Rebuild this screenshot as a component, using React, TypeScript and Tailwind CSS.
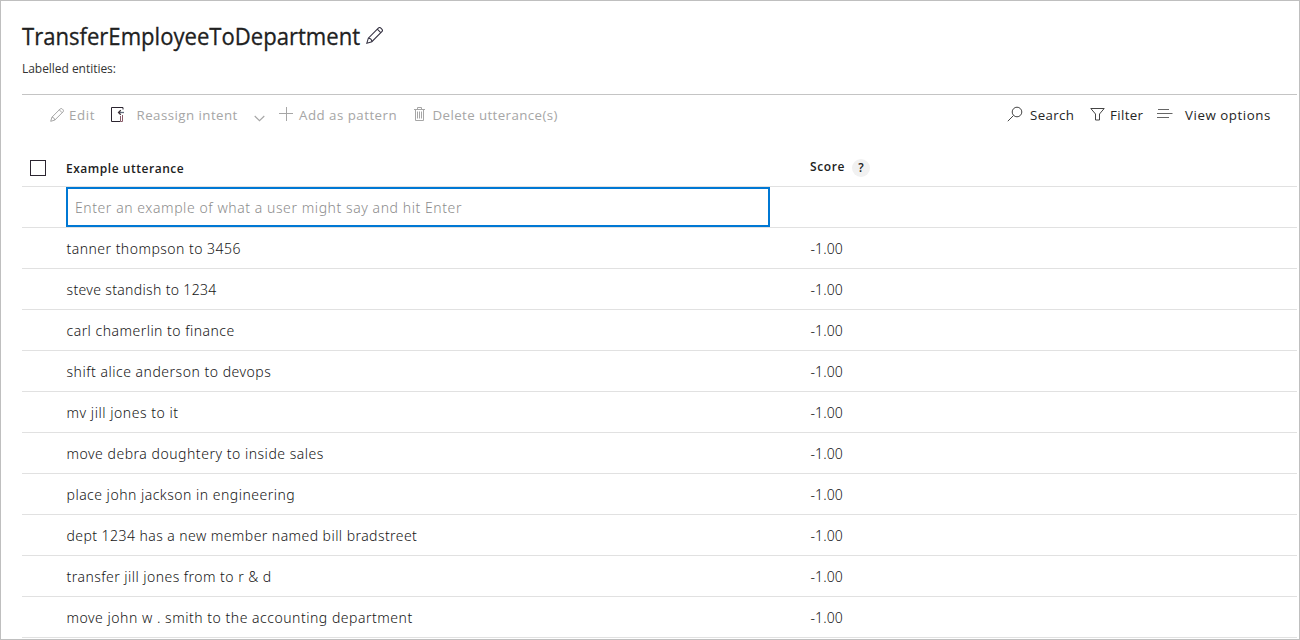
type Row = { text: string; tracking: string };

const rows: Row[] = [
  { text: "tanner thompson to 3456", tracking: "tracking-[0.47px]" },
  { text: "steve standish to 1234", tracking: "tracking-[0.34px]" },
  { text: "carl chamerlin to finance", tracking: "tracking-[0.48px]" },
  { text: "shift alice anderson to devops", tracking: "tracking-[0.51px]" },
  { text: "mv jill jones to it", tracking: "tracking-[0.54px]" },
  { text: "move debra doughtery to inside sales", tracking: "tracking-[0.52px]" },
  { text: "place john jackson in engineering", tracking: "tracking-[0.49px]" },
  { text: "dept 1234 has a new member named bill bradstreet", tracking: "tracking-[0.44px]" },
  { text: "transfer jill jones from to r & d", tracking: "tracking-[0.46px]" },
  { text: "move john w . smith to the accounting department", tracking: "tracking-[0.52px]" },
];

function Pencil({ className }: { className: string }) {
  return (
    <svg className={className} viewBox="0 0 16 16" fill="none" stroke="currentColor" strokeWidth="1">
      <path d="M.8 15.200l1.400-4.700L11.600 1.100a1.700 1.700 0 0 1 2.400 0l.9.9a1.700 1.700 0 0 1 0 2.400L5.500 13.800z" />
      <path d="M2.200 10.500c1.700.1 3.200 1.600 3.300 3.300M10.600 2.100l3.300 3.300" />
    </svg>
  );
}

export default function App() {
  return (
    <div className="flex h-[640px] w-[1300px] flex-col overflow-hidden border border-[#bfbfbf] bg-white pr-[2px] pl-[21px] font-['Open_Sans','Noto_Sans',sans-serif] whitespace-nowrap text-[#212121]">
      <header className="flex h-[94px] shrink-0 flex-col border-b border-[#c4c4c4] pt-5">
        <div className="-mt-px flex h-8 items-center">
          <h1 className="w-[344px] origin-left scale-x-[0.92] text-[24px] leading-8 [-webkit-text-stroke:0.3px_#212121]">
            TransferEmployeeToDepartment
          </h1>
          <Pencil className="-mt-px size-[17px] text-[#333040]" />
        </div>
        <div className="mt-[9px] text-[12px] leading-4 tracking-[-0.04px] text-[#333]">Labelled entities:</div>
      </header>

      <div className="flex h-[40px] shrink-0 items-center pl-[28px] text-[13.3px] leading-5 text-[#a6a6a6]">
        <Pencil className="mr-[5px] size-[14px] text-[#999]" />
        <span className="w-[41.5px] tracking-[0.65px]">Edit</span>
        <svg className="mr-[12px] h-[16px] w-[14px]" viewBox="0 0 14 16" fill="none">
          <path d="M12 2.500V.5H.5v14h9" stroke="#2b2530" strokeWidth="1" />
          <path d="M13 5.500H7.500" stroke="#5f6a7a" strokeWidth="1.300" />
          <path d="M9.800 3.300L7.500 5.500l2.300 2.200" stroke="#3c3036" strokeWidth="1.200" />
          <path d="M11.500 8v6.500h-2M9.500 9v5" stroke="#8a5a68" strokeWidth="1" />
        </svg>
        <span className="w-[117.5px] tracking-[0.45px]">Reassign intent</span>
        <svg className="mt-[7px] mr-[14px] h-[7px] w-[11px]" viewBox="0 0 11 7" fill="none" stroke="currentColor" strokeWidth="1.100">
          <path d="M.7 1l4.800 4.700L10.300 1" />
        </svg>
        <svg className="-mt-[2px] mr-[6px] size-[14px]" viewBox="0 0 14 14" fill="none" stroke="currentColor">
          <path d="M0 6.500h14M7.500 0v14" />
        </svg>
        <span className="w-[115px] tracking-[0.48px]">Add as pattern</span>
        <svg className="-mt-[2px] mr-[7.500px] h-[14px] w-[11px]" viewBox="0 0 11 14" fill="none" stroke="currentColor">
          <path d="M0 2.500h11M3.500 2.500v-2h4v2M1.500 2.500v11h8v-11M3.500 4.500v7M5.500 4.500v7M7.500 4.500v7" />
        </svg>
        <span className="tracking-[0.4px]">Delete utterance(s)</span>

        <div className="ml-auto flex items-center pr-[25px] text-[#252525]">
          <svg className="-mt-[3px] mr-[7px] size-[16px]" viewBox="0 0 16 16" fill="none" stroke="#444">
            <circle cx="10" cy="6" r="4.800" />
            <path d="M6.500 9.500L.8 15.200" />
          </svg>
          <span className="w-[60px] tracking-[0.35px]">Search</span>
          <svg className="-mt-[3px] mr-[5px] h-[14px] w-[15px]" viewBox="0 0 15 14" fill="none" stroke="#444">
            <path d="M.8 1.500h13.400L9.500 7v6h-4V7z" />
          </svg>
          <span className="w-[47px] tracking-[0.35px]">Filter</span>
          <svg className="-mt-[3px] mr-[12px] h-[9px] w-[16px]" viewBox="0 0 16 9" fill="none" stroke="#666">
            <path d="M1 .5h11M0 4.500h15.500M0 8.500h12" />
          </svg>
          <span className="w-[87px] tracking-[0.55px]">View options</span>
        </div>
      </div>

      <div className="flex h-[52px] shrink-0 items-start border-b border-[#e1e1e1] pt-[22px] text-[12px] leading-5 font-semibold">
        <div className="mt-[3px] ml-[8px] size-[16px] border border-[#2b2530]" />
        <div className="mt-[2px] ml-[20px] w-[744px] tracking-[0.53px]">Example utterance</div>
        <div className="w-[42px] tracking-[0.6px]">Score</div>
        <div className="mt-[2px] flex size-[18px] items-center justify-center rounded-full bg-[#f1f1f1] text-[12px]">?</div>
      </div>

      <div className="flex h-[41px] shrink-0 border-b border-[#e1e1e1] pl-[44px] font-['Noto_Sans',sans-serif]">
        <div className="flex h-[40px] w-[704px] items-center border-2 border-[#0078d4] pl-[7px] text-[14px] font-light tracking-[0.57px] text-[#8c8c8c]">
          Enter an example of what a user might say and hit Enter
        </div>
      </div>

      {rows.map((row) => (
        <div
          key={row.text}
          className="flex h-[41px] shrink-0 items-center border-b border-[#e1e1e1] pt-px pl-[44.5px] font-['Noto_Sans',sans-serif] text-[14px] font-light text-[#151515]"
        >
          <span className="w-[744px]">
            <span className={row.tracking}>{row.text}</span>
          </span>
          <span className="tracking-[0.1px]">-1.00</span>
        </div>
      ))}
    </div>
  );
}
